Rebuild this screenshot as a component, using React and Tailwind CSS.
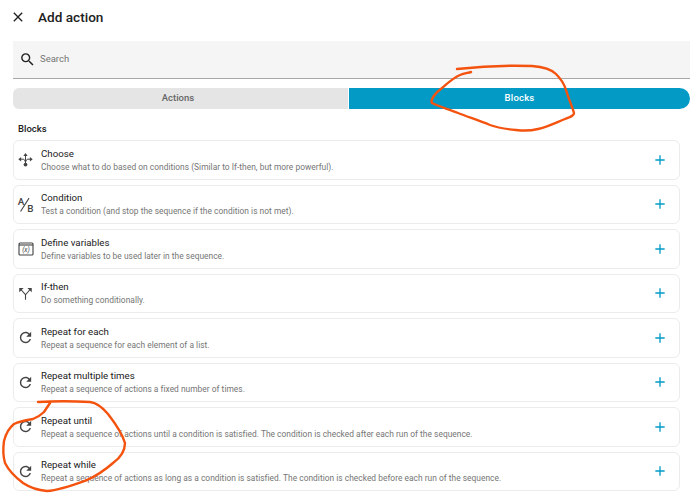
const blocks = [
  { title: 'Choose', desc: 'Choose what to do based on conditions (Similar to If-then, but more powerful).', icon: 'choose' },
  { title: 'Condition', desc: 'Test a condition (and stop the sequence if the condition is not met).', icon: 'condition' },
  { title: 'Define variables', desc: 'Define variables to be used later in the sequence.', icon: 'variable' },
  { title: 'If-then', desc: 'Do something conditionally.', icon: 'ifthen' },
  { title: 'Repeat for each', desc: 'Repeat a sequence for each element of a list.', icon: 'repeat' },
  { title: 'Repeat multiple times', desc: 'Repeat a sequence of actions a fixed number of times.', icon: 'repeat' },
  { title: 'Repeat until', desc: 'Repeat a sequence of actions until a condition is satisfied. The condition is checked after each run of the sequence.', icon: 'repeat' },
  { title: 'Repeat while', desc: 'Repeat a sequence of actions as long as a condition is satisfied. The condition is checked before each run of the sequence.', icon: 'repeat' },
];

function BlockIcon({ name }) {
  if (name === 'repeat') {
    return (
      <svg width="17" height="17" viewBox="0 0 24 24" fill="#444444">
        <path d="M17.65,6.35C16.2,4.9 14.21,4 12,4A8,8 0 0,0 4,12A8,8 0 0,0 12,20C15.73,20 18.84,17.45 19.73,14H17.65C16.83,16.33 14.61,18 12,18A6,6 0 0,1 6,12A6,6 0 0,1 12,6C13.66,6 15.14,6.69 16.22,7.78L13,11H20V4L17.65,6.35Z" />
      </svg>
    );
  }
  if (name === 'choose') {
    return (
      <svg width="15" height="15" viewBox="0 0 24 24" fill="none" stroke="#444444" strokeWidth="1.6">
        <path d="M12 6V19M4 11.5H8M16 11.5H20M8 11.5C10 11.5 11.5 13 12 17M16 11.5C14 11.5 12.5 13 12 17" />
        <path d="M12 1.5L15.5 6.5H8.5Z M0.5 11.5L5 8V15Z M23.5 11.5L19 8V15Z" fill="#444444" stroke="none" />
        <circle cx="12" cy="20" r="3" fill="#444444" stroke="none" />
      </svg>
    );
  }
  if (name === 'condition') {
    return (
      <svg width="17" height="17" viewBox="0 0 24 24" fill="#444444">
        <text x="1" y="12" fontFamily="Roboto, sans-serif" fontSize="14" fontWeight="500">A</text>
        <text x="14.5" y="23" fontFamily="Roboto, sans-serif" fontSize="14" fontWeight="500">B</text>
        <path d="M5 22L17 3" stroke="#444444" strokeWidth="1.5" fill="none" />
      </svg>
    );
  }
  if (name === 'variable') {
    return (
      <svg width="16" height="16" viewBox="0 0 24 24" fill="none">
        <rect x="1.5" y="3" width="21" height="18" rx="1.5" stroke="#444444" strokeWidth="1.7" />
        <path d="M1.5 6H22.5" stroke="#444444" strokeWidth="1.7" />
        <text x="12" y="17" textAnchor="middle" fontFamily="Roboto, sans-serif" fontStyle="italic" fontSize="10" fill="#444444">(x)</text>
      </svg>
    );
  }
  return (
    <svg width="15" height="15" viewBox="0 0 24 24" fill="none" stroke="#444444" strokeWidth="1.8">
      <path d="M12 22V14L5 6M12 14L19 6" />
      <path d="M2 3H9L2 10Z M22 3H15L22 10Z" fill="#444444" stroke="none" />
    </svg>
  );
}

function BlockRow({ block }) {
  return (
    <div className="flex h-[39.5px] shrink-0 items-center rounded-md border border-[#ececec] bg-white pr-[11px]">
      <div className="mr-[4px] flex w-[23px] shrink-0 justify-center">
        <BlockIcon name={block.icon} />
      </div>
      <div className="min-w-0 flex-1">
        <p className="text-[9.7px] leading-[13px] text-[#212121]">{block.title}</p>
        <p className="mt-[1px] truncate text-[8.4px] leading-[12px] tracking-[0.025px] text-[#757575]">{block.desc}</p>
      </div>
      <svg width="16" height="16" viewBox="0 0 24 24" fill="#039bc6">
        <path d="M19,13H13V19H11V13H5V11H11V5H13V11H19V13Z" />
      </svg>
    </div>
  );
}

export default function App() {
  return (
    <div className="relative h-[493px] w-[690px] overflow-hidden bg-white font-['Roboto',sans-serif]">
      {/* Header */}
      <div className="flex h-[41px] items-center pb-[7px] pl-[10px]">
        <svg width="16" height="16" viewBox="0 0 24 24" fill="#212121">
          <path d="M19,6.41L17.59,5L12,10.59L6.41,5L5,6.41L10.59,12L5,17.59L6.41,19L12,13.41L17.59,19L19,17.59L13.41,12L19,6.41Z" />
        </svg>
        <h1 className="ml-[12px] text-[13.6px] font-medium text-[#212121]">Add action</h1>
      </div>

      <div className="pl-[13px]">
        {/* Search */}
        <div className="flex h-[38px] items-center border-b border-[#a8a8a8] bg-[#f5f5f5] pl-[6px]">
          <svg width="17" height="17" viewBox="0 0 24 24" fill="#212121">
            <path d="M9.5,3A6.5,6.5 0 0,1 16,9.5C16,11.11 15.41,12.59 14.44,13.73L14.71,14H15.5L20.5,19L19,20.5L14,15.5V14.71L13.73,14.44C12.59,15.41 11.11,16 9.5,16A6.5,6.5 0 0,1 3,9.5A6.5,6.5 0 0,1 9.5,3M9.5,5C7,5 5,7 5,9.5C5,12 7,14 9.5,14C12,14 14,12 14,9.5C14,7 12,5 9.5,5Z" />
          </svg>
          <span className="ml-[4px] text-[9.5px] text-[#757575]">Search</span>
        </div>

        {/* Tabs */}
        <div className="mt-[9px] flex h-[21px] gap-[1px]">
          <div className="flex w-[335px] items-center justify-center rounded-l-md bg-[#e5e5e5] pr-[5px] text-[9.5px] font-medium text-[#666666]">
            Actions
          </div>
          <div className="flex flex-1 items-center justify-center rounded-r-xl bg-[#039bc6] text-[9.5px] font-medium tracking-[0.2px] text-white">
            Blocks
          </div>
        </div>

        <h2 className="mt-[14px] pl-[5px] text-[9.5px] leading-[12px] font-medium text-[#212121]">Blocks</h2>

        {/* Block list */}
        <div className="mt-[5px] mr-[10px] flex flex-col gap-[5px]">
          {blocks.map((block) => (
            <BlockRow key={block.title} block={block} />
          ))}
        </div>
      </div>

      {/* Hand-drawn annotations */}
      <svg className="pointer-events-none absolute top-0 left-0" width="690" height="493" fill="none" stroke="#f4530f" strokeWidth="2.4" strokeLinecap="round" strokeLinejoin="round">
        <path d="M457 69C475 67 505 65 532 66C545 67 552 70 556 74C561 79 564 83 566 90C569 100 572 106 574 113C574 116 570 117 565 119C555 123 547 127 538 129C530 131 524 131 516 130C505 129 498 128 490 125C478 120 468 117 458 113C448 109 438 106 432 103C430 100 435 93 442 88C448 83 453 78 460 75C464 73 468 73 471 72" />
        <path d="M38 402C55 401 72 401 90 402C98 403 103 408 108 414C115 423 122 433 125 443C125 451 120 458 113 463C105 470 96 476 87 480C76 484 60 490 47 491C36 490 29 487 23 483C15 477 9 471 5 463C3 456 3 448 4 441C6 433 9 428 14 424C20 421 27 420 33 419C38 417 41 415 44 412C46 409 48 406 50 403" />
      </svg>
    </div>
  );
}
